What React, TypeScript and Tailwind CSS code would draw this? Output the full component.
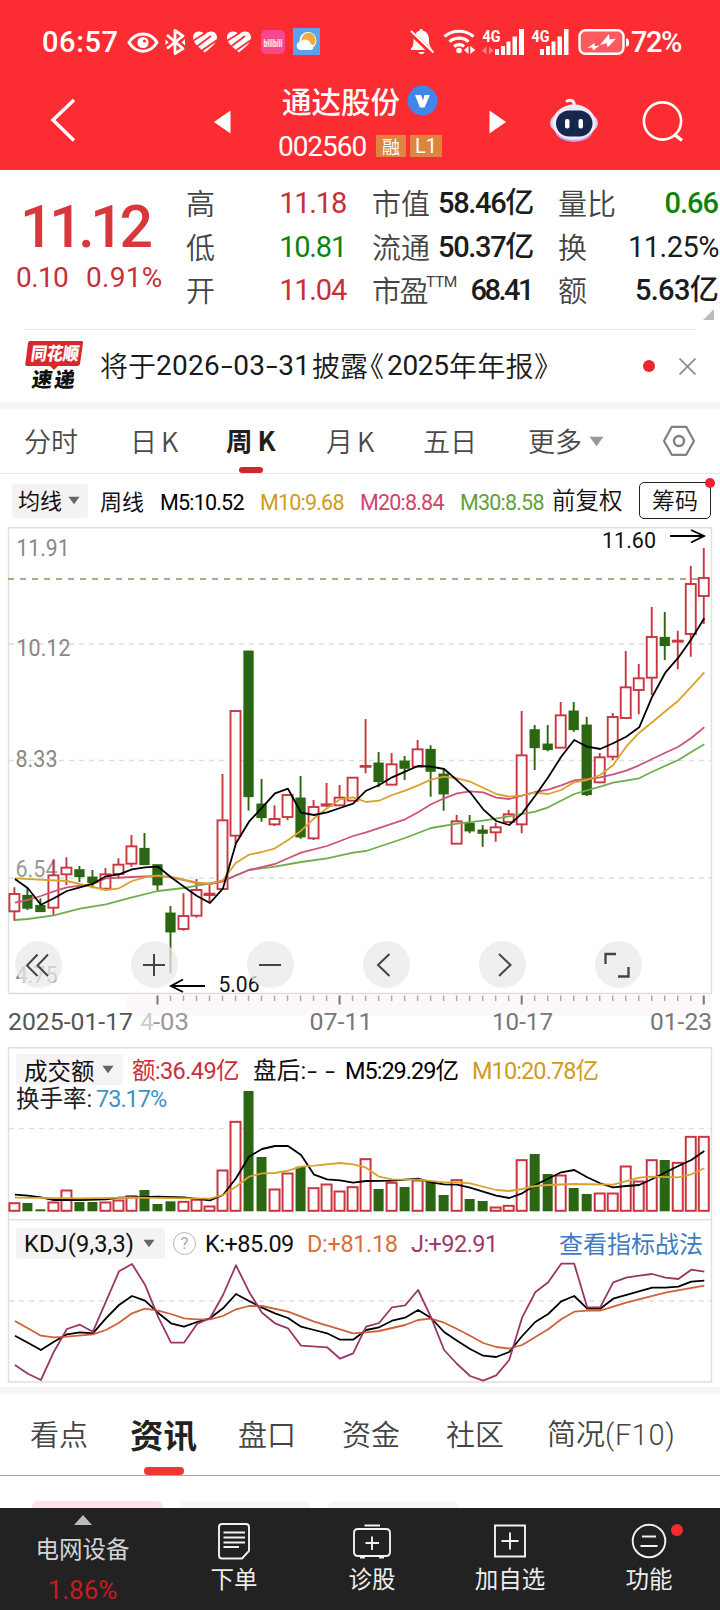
import type { ReactNode } from "react";

const NUM = "font-['Roboto','Noto_Sans_CJK_SC',sans-serif]";
const SVG_FONT = "Roboto, 'Noto Sans CJK SC', sans-serif";

/* ---------- chart data ---------- */
// [rising, high, bodyTop, bodyBottom, low] in thirds of a pixel below y=640
type Candle = [number, number, number, number, number];
const CANDLES: Candle[] = [
  [1, 742, 762, 814, 842], [0, 745, 766, 805, 810], [0, 775, 796, 815, 815], [1, 658, 706, 803, 825],
  [1, 652, 683, 703, 735], [0, 678, 689, 710, 726], [0, 690, 711, 728, 745], [1, 684, 703, 746, 746],
  [1, 655, 674, 702, 716], [1, 585, 619, 671, 680], [0, 579, 625, 674, 674], [0, 674, 674, 735, 752],
  [0, 798, 819, 876, 1000], [1, 760, 828, 867, 872], [1, 717, 750, 827, 833], [1, 735, 761, 765, 790],
  [1, 402, 541, 747, 747], [1, 213, 213, 587, 612], [0, 33, 33, 470, 512], [0, 417, 492, 533, 545],
  [1, 496, 537, 553, 558], [1, 462, 465, 531, 541], [0, 408, 474, 591, 596], [1, 480, 501, 595, 600],
  [1, 429, 493, 497, 500], [1, 435, 473, 496, 498], [1, 413, 413, 482, 482], [1, 237, 378, 378, 400],
  [0, 336, 369, 425, 442], [1, 339, 373, 434, 436], [0, 348, 363, 385, 420], [1, 300, 328, 380, 380],
  [0, 316, 328, 394, 470], [0, 390, 402, 462, 512], [1, 525, 544, 611, 611], [0, 525, 550, 573, 580],
  [0, 555, 570, 580, 620], [1, 548, 562, 577, 605], [1, 510, 523, 546, 546], [1, 213, 346, 553, 580],
  [0, 255, 269, 323, 390], [0, 255, 312, 329, 334], [1, 186, 226, 323, 323], [0, 186, 213, 269, 275],
  [0, 231, 255, 464, 468], [1, 339, 352, 427, 430], [1, 219, 231, 350, 360], [1, 33, 142, 234, 234],
  [1, 72, 115, 150, 223], [1, -99, -9, 113, 165], [0, -84, -8, 17, 60], [1, -28, 2, 5, 88],
  [1, -222, -168, -18, 50], [1, -276, -186, -132, -48],
];
const VOLUME = [
  488, 489, 508, 486, 450, 486, 486, 486, 480, 467, 450, 492, 484, 484, 478, 498, 390, 244, 153, 351, 447, 399, 380,
  443, 432, 453, 440, 356, 447, 427, 441, 420, 424, 465, 419, 477, 483, 501, 496, 359, 342, 402, 405, 444, 462, 459,
  459, 378, 423, 359, 360, 367, 289, 289,
];
type Pts = [number, number][];
const M5: Pts = [[0,717],[1,745],[2,794],[3,775],[4,753],[5,742],[6,731],[7,709],[8,703],[9,688],[10,682],[11,680],[12,712],[13,740],[14,768],[15,789],[16,745],[17,610],[18,545],[19,503],[20,460],[21,446],[22,518],[23,525],[24,517],[25,504],[26,491],[27,452],[28,435],[29,412],[30,395],[31,378],[32,380],[33,387],[34,421],[35,457],[36,508],[37,543],[38,555],[39,520],[40,467],[41,412],[42,350],[43,300],[44,320],[45,327],[46,310],[47,290],[48,262],[49,170],[50,98],[51,53],[52,-2],[53,-65]];
const M10: Pts = [[0,715],[4,723],[7,750],[8,745],[9,723],[10,712],[11,706],[12,712],[14,727],[15,732],[16,720],[17,668],[18,644],[19,636],[20,625],[21,600],[22,572],[23,535],[24,505],[25,478],[26,472],[27,486],[28,482],[29,465],[30,452],[31,436],[32,419],[33,410],[34,415],[35,425],[36,443],[37,462],[38,470],[39,466],[40,458],[41,462],[42,450],[43,427],[44,420],[45,405],[46,375],[47,320],[48,278],[49,247],[50,214],[51,182],[52,140],[53,97]];
const M20: Pts = [[0,788],[1,780],[2,768],[3,754],[4,742],[5,737],[6,733],[7,715],[9,711],[11,708],[12,711],[13,720],[14,729],[15,732],[16,724],[17,706],[18,690],[20,672],[21,655],[22,638],[24,618],[26,588],[27,577],[30,538],[31,517],[32,493],[33,475],[34,460],[35,454],[36,457],[37,473],[38,477],[39,467],[40,456],[41,449],[42,436],[43,421],[44,417],[45,412],[46,403],[47,392],[48,376],[49,357],[50,338],[51,320],[52,294],[53,262]];
const M30: Pts = [[0,840],[1,837],[3,826],[5,806],[7,793],[9,772],[11,753],[13,744],[14,737],[16,723],[18,690],[20,680],[22,666],[24,655],[26,638],[27,633],[30,594],[32,564],[34,551],[36,542],[38,529],[40,515],[41,502],[43,462],[45,440],[46,428],[48,415],[49,395],[51,360],[52,336],[53,313]];
const V5: Pts = [[0,464],[1,467],[2,472],[3,480],[5,480],[7,478],[8,473],[9,472],[11,470],[13,472],[15,481],[16,465],[17,415],[18,350],[19,327],[20,318],[21,318],[22,345],[23,404],[24,418],[25,421],[26,428],[27,423],[29,422],[31,416],[32,427],[33,433],[34,434],[35,443],[37,467],[38,474],[39,460],[40,435],[42,397],[43,390],[44,412],[45,430],[46,442],[47,438],[48,435],[49,417],[51,378],[52,360],[53,333]];
const V10: Pts = [[0,473],[5,475],[9,473],[15,476],[16,465],[17,440],[18,410],[19,400],[20,399],[21,392],[22,380],[23,377],[25,369],[26,373],[27,383],[28,410],[29,418],[31,419],[33,427],[34,427],[35,430],[37,450],[38,453],[39,447],[40,438],[41,435],[43,432],[46,434],[48,413],[49,410],[51,412],[52,403],[53,385]];
const J: Pts = [[0,975],[1,1001],[2,1020],[3,935],[4,867],[5,854],[6,875],[7,785],[8,694],[9,672],[10,734],[11,830],[12,908],[13,908],[14,852],[15,835],[16,765],[17,676],[18,755],[19,818],[20,850],[21,865],[22,917],[24,922],[25,956],[26,940],[27,860],[28,849],[29,802],[30,796],[31,750],[32,832],[33,930],[34,972],[35,1008],[36,1022],[37,1006],[38,960],[39,832],[40,757],[41,727],[42,671],[43,671],[44,802],[45,802],[46,727],[47,713],[48,707],[49,702],[50,713],[51,717],[52,689],[53,695]];
const K: Pts = [[0,887],[1,908],[2,930],[3,905],[4,883],[5,877],[6,880],[7,835],[8,795],[9,768],[10,782],[11,818],[12,850],[13,860],[14,846],[15,835],[16,805],[17,762],[18,783],[19,803],[20,820],[21,834],[22,860],[23,870],[24,880],[25,899],[26,899],[27,870],[28,862],[29,842],[30,833],[31,810],[32,834],[33,876],[34,902],[35,927],[36,947],[37,951],[38,936],[39,888],[40,846],[41,822],[42,784],[43,768],[44,806],[45,806],[46,776],[49,743],[50,743],[51,740],[52,725],[53,722]];
const D: Pts = [[0,843],[1,865],[2,887],[3,892],[4,890],[6,883],[7,870],[8,848],[9,820],[10,806],[11,812],[12,822],[13,835],[14,838],[15,838],[16,828],[17,808],[18,798],[19,798],[21,815],[23,845],[25,868],[26,880],[27,877],[28,873],[30,855],[31,840],[32,836],[33,848],[34,867],[35,887],[36,909],[37,921],[38,926],[39,915],[41,868],[42,838],[43,815],[44,812],[45,812],[47,788],[50,758],[53,737]];

const RED = "#c9363f";
const GREEN = "#2b6612";
const cx = (i: number) => 14.4 + i * 13.007;

function Line({ pts, base, color }: { pts: Pts; base: number; color: string }) {
  return (
    <polyline
      points={pts.map(([i, y]) => `${(cx(i) + 0.5).toFixed(1)},${(base + y / 3).toFixed(1)}`).join(" ")}
      fill="none"
      stroke={color}
      strokeWidth="1.8"
      strokeLinejoin="round"
    />
  );
}

function Label({ x, y, w, size, fill, children }: { x: number; y: number; w: number; size: number; fill: string; children: string }) {
  return (
    <text x={x} y={y} fontSize={size} fill={fill} textLength={w} lengthAdjust="spacingAndGlyphs" fontFamily={SVG_FONT}>
      {children}
    </text>
  );
}

function Caret({ className = "", color = "#666" }: { className?: string; color?: string }) {
  return (
    <svg viewBox="0 0 14 10" className={className}>
      <path d="M0.5 0.5H13.5L7 9.5Z" fill={color} />
    </svg>
  );
}

/* ---------- header ---------- */
function Heart({ x }: { x: number }) {
  return (
    <g transform={`translate(${x} 0)`}>
      <path d="M12 52.500C8 49 0 43.500 0 37.500C0 31 8 29.500 12 34.500C16 29.500 24 31 24 37.500C24 43.500 16 49 12 52.500Z" fill="#fff" />
      <path d="M-1 41.500L12.500 33M4 46.500L18 36M9 50.500L24 40" stroke="#fb2d33" strokeWidth="1.700" />
    </g>
  );
}

function StatusBar() {
  return (
    <div className="flex h-[70px] items-center pt-[13px] text-white">
      <span className={`mt-[2px] ml-[42px] w-[83px] text-[29px] leading-none font-medium tracking-[0.6px] ${NUM}`}>06:57</span>
      <svg className="h-[36px] w-[200px] shrink-0" viewBox="125 24 200 36">
        <path d="M129 42.5C133 36 138 34 143 34S153 36 157 42.5C153 49 148 51.200 143 51.200S133 49 129 42.500Z" fill="none" stroke="#fff" strokeWidth="3" />
        <circle cx="143" cy="42.500" r="5.600" fill="#fff" />
        <circle cx="144.500" cy="41" r="1.600" fill="#fb2d33" />
        <path d="M167 35L183 48.500L175 53.500V30.500L183 36L167 48.500" fill="none" stroke="#fff" strokeWidth="2.800" strokeLinejoin="round" />
        <path d="M165.500 39.500l3 2.700-3 2.700zM185 39l-3.500 3.200 3.500 3.200z" fill="#fff" />
        <Heart x={193} />
        <Heart x={227} />
        <rect x="261" y="30" width="24" height="24" rx="5" fill="#f6488f" />
        <text x="263.500" y="46.500" fontSize="11" fontWeight="900" fill="#ffe3f0" textLength="19" lengthAdjust="spacingAndGlyphs" fontFamily="Roboto, sans-serif">bilibili</text>
        <rect x="293" y="28" width="27" height="27" fill="#5aa2ea" />
        <circle cx="308" cy="40.500" r="8.500" fill="#fff" />
        <circle cx="308.500" cy="40" r="7.200" fill="#f3ab3c" />
        <path d="M301 50a4.300 4.300 0 0 1 0-8.600 5.500 5.500 0 0 1 9.500 2.600c4 .5 3.500 6 .5 6z" fill="#fff" />
      </svg>
      <svg className="ml-[79px] h-[36px] w-[226px] shrink-0" viewBox="404 24 226 36">
        <path d="M411 50V48.500C413.500 46.500 413.500 43 413.500 40C413.500 35 416.500 31.500 419.500 30.800C419.500 28.300 423 28.300 423 30.800C427 31.500 429 35.500 429 40C429 43.500 429.500 46.500 431.500 48.500V50ZM418.500 52H424.500C424 54.800 419 54.800 418.500 52Z" fill="#fff" />
        <path d="M409.500 31.500L431.500 52.500" stroke="#fb2d33" strokeWidth="5" />
        <path d="M411 31L433.500 52.500" stroke="#fff" strokeWidth="2" />
        <g fill="none" stroke="#fff" strokeWidth="3.200">
          <path d="M444.500 36.500C452.500 29.500 465.500 29.500 473.500 36.500" />
          <path d="M449.500 41.800C455 37 463.500 37 468.500 41.800" />
          <path d="M454 46.500C457 44 461.500 44 464 46.500" />
        </g>
        <circle cx="459" cy="50.500" r="2.800" fill="#fff" />
        <path d="M468.500 46v8l-4.500-4zM470.300 46v8l5-4z" fill="#fff" />
        <path d="M486.500 46.500v8l-4.500-4zM489 46.500v8l4.500-4z" fill="#ff7d80" />
        <g fill="#fff">
          <rect x="495" y="49" width="4" height="6" /><rect x="501" y="46" width="4" height="9" /><rect x="506.500" y="41.500" width="4" height="13.500" /><rect x="512.500" y="36.500" width="4.500" height="18.500" /><rect x="519" y="29" width="5" height="26" />
          <rect x="540" y="49" width="4" height="6" /><rect x="546" y="46" width="4" height="9" /><rect x="551.500" y="41.500" width="4" height="13.500" /><rect x="557.500" y="36.500" width="4.500" height="18.500" /><rect x="564" y="29" width="4.500" height="26" />
          <text x="482.500" y="42" fontSize="17" fontWeight="700" textLength="18" lengthAdjust="spacingAndGlyphs" fontFamily="Roboto, sans-serif">4G</text>
          <text x="531.500" y="42" fontSize="17" fontWeight="700" textLength="18" lengthAdjust="spacingAndGlyphs" fontFamily="Roboto, sans-serif">4G</text>
          <path d="M626 38.500h1q2 0 2 4t-2 4h-1z" />
        </g>
        <rect x="579.500" y="30.300" width="44" height="23.500" rx="6" fill="#fd5a60" stroke="#fff" strokeWidth="2.400" />
        <path d="M600 45L609 34l.5 5.500 6.500-.8L607.500 47.500l-.8-4.300zM587.500 48l7-5 .3 3.200 5-.8-6.800 5-.5-2.900z" fill="#fff" />
      </svg>
      <span className={`mt-[2px] ml-[1px] text-[29px] leading-none font-medium tracking-[-1.5px] ${NUM}`}>72%</span>
    </div>
  );
}

function Header() {
  return (
    <header className="h-[170px] bg-[#fb2d33] text-white">
      <StatusBar />
      <div className="flex h-[99px] items-start">
        <svg className="mt-[27px] ml-[48px] h-[48px] w-[30px]" viewBox="48 97 30 48">
          <path d="M74 100L53 120L74 140.500" fill="none" stroke="#fff" strokeWidth="3.400" />
        </svg>
        <svg className="mt-[40px] ml-[136px] h-[24px] w-[17px]" viewBox="0 0 17 24"><path d="M16.500 0.500V23.500L0 12Z" fill="#fff" /></svg>
        <div className="ml-[47px] w-[172px]">
          <div className="mt-[12px] ml-[4px] flex items-center">
            <h1 className="w-[125px] text-[29.500px] leading-[36px] font-medium whitespace-nowrap font-['Noto_Sans_CJK_SC',sans-serif]">通达股份</h1>
            <svg className="h-[31px] w-[31px]" viewBox="0 0 31 31">
              <circle cx="15.500" cy="15.500" r="15" fill="#3f87e8" />
              <path d="M8 10H14L16 15.500L17.500 10H23L17.500 22.500H13Z" fill="#fff" />
            </svg>
          </div>
          <div className="mt-[13px] flex items-center">
            <span className={`mt-[2px] w-[98px] text-[28px] leading-[28px] font-[450] tracking-[-1.050px] ${NUM}`}>002560</span>
            <span className="flex h-[22px] w-[30px] items-center justify-center bg-[#dd8441] text-[18px] leading-none font-['Noto_Sans_CJK_SC',sans-serif]">融</span>
            <span className={`ml-[4px] flex h-[22px] w-[32px] items-center justify-center bg-[#dd8441] text-[20px] leading-none ${NUM}`}>L1</span>
          </div>
        </div>
        <svg className="mt-[40px] ml-[39px] h-[24px] w-[17px]" viewBox="0 0 17 24"><path d="M0.500 0.500V23.500L17 12Z" fill="#fff" /></svg>
        <svg className="mt-[25px] ml-[42px] h-[50px] w-[52px]" viewBox="548 95 52 50">
          <path d="M574 106C575 101 571 99 567 101" fill="none" stroke="#f4ecff" strokeWidth="3" strokeLinecap="round" />
          <ellipse cx="574" cy="123" rx="24" ry="13" fill="#dcc9ff" />
          <ellipse cx="574" cy="123" rx="21.500" ry="18.500" fill="#efeaff" />
          <path d="M557 134C564 143 584 143 591 134" fill="none" stroke="#c3a5f8" strokeWidth="2" />
          <rect x="556" y="110.500" width="36.500" height="26" rx="13" fill="#17264c" />
          <rect x="565" y="119" width="4.500" height="9.500" rx="2" fill="#fff" /><rect x="578.500" y="119" width="4.500" height="9.500" rx="2" fill="#fff" />
        </svg>
        <svg className="mt-[29px] ml-[39px] h-[46px] w-[46px]" viewBox="640 99 46 46">
          <circle cx="663.500" cy="121" r="18.600" fill="none" stroke="#fff" strokeWidth="2.600" />
          <path d="M675.500 134.500L683 140.500" stroke="#fff" strokeWidth="3.400" />
        </svg>
      </div>
    </header>
  );
}

/* ---------- quote ---------- */
function Stat({ label, sup, value, color = "text-[#1c1c1c]", tight = "mr-[1px] tracking-[-1.350px]", medium = false }: { label: string; sup?: string; value: string; color?: string; tight?: string; medium?: boolean }) {
  return (
    <div className="flex h-[43.700px] items-center justify-between">
      <span className={`mb-[1px] flex text-[29px] leading-none whitespace-nowrap text-[#444] font-['Noto_Sans_CJK_SC',sans-serif] font-[350] ${sup ? "tracking-[-1.500px]" : ""}`}>
        {label}
        {sup && <sup className={`top-0 -ml-px text-[15.500px] leading-none font-normal tracking-[-0.500px] ${NUM}`}>{sup}</sup>}
      </span>
      <span className={`mt-[1px] text-[29px] leading-none whitespace-nowrap ${tight} ${color} ${medium ? "font-medium" : "font-[450]"} ${NUM}`}>{value}</span>
    </div>
  );
}

function Quote() {
  return (
    <section className="flex h-[159px] bg-white pt-[11px]">
      <div className={`w-[186px] text-[#d8373c] ${NUM}`}>
        <div className="mt-[16px] pl-[20px] text-[59px] leading-[60px] font-medium tracking-[-4.400px]">11.12</div>
        <div className="mt-[7px] flex pl-[16px] text-[28px] leading-[28px] font-[450] text-[#c5303a]">
          <span className="w-[70px] tracking-[-0.600px]">0.10</span>
          <span className="tracking-[0.300px]">0.91%</span>
        </div>
      </div>
      <div className="w-[160px]">
        <Stat label="高" value="11.18" color="text-[#c5303a]" tight="tracking-[-1.200px]" />
        <Stat label="低" value="10.81" color="text-[#0d830d]" tight="tracking-[-1.200px]" />
        <Stat label="开" value="11.04" color="text-[#c5303a]" tight="tracking-[-1.200px]" />
      </div>
      <div className="ml-[26px] w-[162px]">
        <Stat label="市值" value="58.46亿" medium />
        <Stat label="流通" value="50.37亿" medium />
        <Stat label="市盈" sup="TTM" value="68.41" medium tight="mr-[2px] tracking-[-2.500px]" />
      </div>
      <div className="ml-[24px] flex w-[162px] flex-col">
        <Stat label="量比" value="0.66" color="text-[#0d830d]" medium tight="mr-[2px] tracking-[-1px]" />
        <Stat label="换" value="11.25%" tight="mr-[1px] tracking-[-0.500px]" />
        <Stat label="额" value="5.63亿" medium tight="mr-[2px] tracking-[-0.700px]" />
        <svg className="-mt-[3px] ml-[145px] h-[11px] w-[11px] shrink-0" viewBox="0 0 11 11"><path d="M11 0V11H0Z" fill="#bbb" /></svg>
      </div>
    </section>
  );
}

function Dash({ children = "-" }: { children?: string }) {
  return <span className="mx-[2.500px] inline-block scale-x-[1.500]">{children}</span>;
}

function News() {
  return (
    <section className="mx-[24px] flex h-[73px] items-center border-t-[1.500px] border-[#ececec] text-[28px] leading-none text-[#1a1a1a] font-['Noto_Sans_CJK_SC',sans-serif]">
      <svg className="h-[52px] w-[62px] shrink-0 overflow-visible" viewBox="24 340 62 52">
        <path d="M30 341H81.500Q83.500 341 83 343L80 364Q79.500 366 77.500 366H58L54 370L50 366H27Q25 366 25.300 364L28 343Q28.300 341 30 341Z" fill="#d9282d" />
        <text x="81" y="360.500" transform="skewX(-8)" fontSize="18" fontWeight="900" fill="#fff" textLength="48" lengthAdjust="spacingAndGlyphs" fontFamily="'Noto Sans CJK SC', sans-serif">同花顺</text>
        <text x="85.500" y="387" transform="skewX(-8)" fontSize="20.500" fontWeight="900" fill="#111" textLength="43" fontFamily="'Noto Sans CJK SC', sans-serif">速递</text>
      </svg>
      <div className="mb-[3px] flex w-[536px] items-center pl-[14px] font-[350] whitespace-nowrap">
        <span className="w-[56px]">将于</span>
        <span className={`mt-[3px] w-[156px] font-normal tracking-[0.300px] ${NUM}`}>2026<Dash />03<Dash />31</span>
        <span className="w-[58px]">披露</span>
        <span className="w-[17px] [font-feature-settings:'halt']">《</span>
        <span className={`mt-[3px] w-[62px] font-normal tracking-[-0.300px] ${NUM}`}>2025</span>
        <span className="w-[85px] tracking-[0.300px]">年年报》</span>
      </div>
      <span className="ml-[22px] h-[12px] w-[12px] shrink-0 rounded-full bg-[#e9262b]" />
      <svg className="ml-[24px] h-[17px] w-[17px] shrink-0" viewBox="0 0 17 17"><path d="M0.500 0.500L16.500 16.500M16.500 0.500L0.500 16.500" stroke="#8b8b8b" strokeWidth="1.700" /></svg>
    </section>
  );
}

function PeriodTabs() {
  const plain = "flex h-full items-center pb-[2px] text-[27px] leading-none text-[#4a4a4a] whitespace-nowrap font-[350]";
  return (
    <nav className="flex h-[65px] items-center border-b-[1.500px] border-[#e8e8e8] font-['Noto_Sans_CJK_SC',sans-serif]">
      <span className={`ml-[24px] w-[106px] ${plain}`}>分时</span>
      <span className={`w-[96px] gap-[4px] ${plain}`}>日<span>K</span></span>
      <span className="relative flex h-full w-[100px] items-center gap-[5px] pb-[2px] text-[26.500px] leading-none font-bold text-[#1f1f1f]">
        周<span>K</span>
        <span className="absolute bottom-0 left-[13px] h-[6px] w-[24px] rounded-full bg-[#d2262f]" />
      </span>
      <span className={`w-[97px] gap-[4px] ${plain}`}>月<span>K</span></span>
      <span className={`w-[105px] ${plain}`}>五日</span>
      <span className={`w-[61px] ${plain}`}>更多</span>
      <Caret className="h-[13px] w-[15px]" color="#999" />
      <svg className="ml-[58px] h-[32px] w-[34px]" viewBox="0 0 34 32">
        <path d="M9.800 1.800H24.200L32 16L24.200 29.800H9.800L2 16Z" fill="none" stroke="#808080" strokeWidth="2.200" strokeLinejoin="round" />
        <circle cx="17" cy="16" r="5" fill="none" stroke="#808080" strokeWidth="2.400" />
      </svg>
    </nav>
  );
}

function Val({ w, color = "text-black", t = "tracking-[-0.800px]", children }: { w: string; color?: string; t?: string; children: ReactNode }) {
  return <span className={`mt-[4px] shrink-0 leading-none whitespace-nowrap ${NUM} ${w} ${color} ${t}`}>{children}</span>;
}

function MaLegend() {
  return (
    <div className="flex h-[53px] items-center text-[21.500px] text-[#111]">
      <div className="ml-[12px] flex h-[34px] w-[76px] items-center rounded-[4px] bg-[#f4f2f3] pl-[6px] text-[22px] leading-none font-['Noto_Sans_CJK_SC',sans-serif]">
        <span className="mb-[3px] w-[50px]">均线</span>
        <Caret className="h-[9px] w-[12px]" />
      </div>
      <span className="mb-[1px] ml-[12px] w-[60px] text-[22px] leading-none font-['Noto_Sans_CJK_SC',sans-serif]">周线</span>
      <Val w="w-[100px]">M5:10.52</Val>
      <Val w="w-[100px]" color="text-[#d29a1e]">M10:9.68</Val>
      <Val w="w-[100px]" color="text-[#d0446a]">M20:8.84</Val>
      <Val w="w-[92px]" color="text-[#5da336]">M30:8.58</Val>
      <span className="mb-[1px] w-[87px] text-[23.500px] leading-none font-[350] font-['Noto_Sans_CJK_SC',sans-serif]">前复权</span>
      <div className="relative flex h-[37px] w-[72px] items-center justify-center rounded-[5px] border-[1.500px] border-[#222] pb-[3px] text-[23px] leading-none font-[350] font-['Noto_Sans_CJK_SC',sans-serif]">
        筹码
        <span className="absolute -top-[5px] -right-[5px] h-[10px] w-[10px] rounded-full bg-[#f5202d]" />
      </div>
    </div>
  );
}

/* ---------- charts ---------- */
function Grid({ y }: { y: number }) {
  return <path d={`M9 ${y}H711`} stroke="#dedede" strokeWidth="1.300" strokeDasharray="5 5" />;
}

function CandleChart() {
  const btn = "flex h-[47px] w-[47px] items-center justify-center rounded-full bg-[#e9e9e9]/75";
  const ic = "h-[30px] w-[30px]";
  return (
    <div className="relative h-[520px]">
      <svg className="block h-[520px] w-[720px]" viewBox="0 527 720 520">
        <rect x="127" y="995" width="584" height="21" fill="#fcf8f9" />
        <path d="M8.500 993.500V527.800H711.500V993.500" fill="none" stroke="#e0e0e0" strokeWidth="1.500" />
        <path d="M8.500 993.500H711.500" stroke="#e0dcdd" strokeWidth="1.500" />
        <Grid y={644} /><Grid y={760.5} /><Grid y={878} />
        <path d="M8 579H711" stroke="#9c8c60" strokeWidth="1.600" strokeDasharray="6 6" />
        <Label x={16.5} y={556} w={53} size={24} fill="#888">11.91</Label>
        <Label x={16.5} y={656} w={54} size={24} fill="#888">10.12</Label>
        <Label x={15.5} y={767} w={42} size={24} fill="#888">8.33</Label>
        <Label x={15.5} y={876.5} w={42} size={24} fill="#999">6.54</Label>
        <Label x={15.5} y={982.5} w={42} size={24} fill="#8a8a8a">4.75</Label>
        {CANDLES.map(([up, h, t, b, l], i) => {
          const x = cx(i);
          const y = (v: number) => 640 + v / 3;
          const color = up ? RED : GREEN;
          return (
            <g key={i} stroke={color} strokeWidth="1.900">
              <path d={`M${x} ${y(h)}V${y(t)}M${x} ${y(b)}V${y(l)}`} />
              {up ? (
                <rect x={x - 5} y={y(t)} width="10" height={Math.max(y(b) - y(t), 0.8)} fill="#fff" />
              ) : (
                <rect x={x - 4.2} y={y(t) + 0.5} width="8.400" height={Math.max(y(b) - y(t) - 1, 1)} fill={color} />
              )}
            </g>
          );
        })}
        <Line pts={M30} base={640} color="#6fae4e" />
        <Line pts={M20} base={640} color="#cf5379" />
        <Line pts={M10} base={640} color="#d8a32c" />
        <Line pts={M5} base={640} color="#000" />
        <Label x={602} y={548} w={54} size={21.5} fill="#111">11.60</Label>
        <path d="M670 536H703M691 530L704 536L691 542.500" fill="none" stroke="#000" strokeWidth="1.900" />
        <Label x={218.500} y={991.5} w={41} size={21.5} fill="#111">5.06</Label>
        <path d="M205 986H171M183 979.500L171 986L183 992" fill="none" stroke="#000" strokeWidth="1.900" />
        {CANDLES.map((_, i) =>
          i < 11 ? null : (
            <path key={i} d={`M${cx(i)} 995.500V${(i - 11) % 14 === 0 ? 1004.500 : 1001}`} stroke={(i - 11) % 14 === 0 ? "#777" : "#aaa"} strokeWidth={(i - 11) % 14 === 0 ? 2 : 1.5} />
          ),
        )}
        <Label x={8} y={1030} w={125} size={23.5} fill="#555">2025-01-17</Label>
        <Label x={140} y={1030} w={14} size={23.5} fill="#ccc">4</Label>
        <Label x={153} y={1030} w={36} size={23.5} fill="#999">-03</Label>
        <Label x={309.5} y={1030} w={63} size={23.5} fill="#777">07-11</Label>
        <Label x={492} y={1030} w={61} size={23.5} fill="#777">10-17</Label>
        <Label x={650} y={1030} w={62} size={23.5} fill="#777">01-23</Label>
      </svg>
      <div className="absolute top-[414px] left-[14.500px] flex gap-[69px]">
        <button className={btn}><svg className={ic} viewBox="0 0 30 30" fill="none" stroke="#444" strokeWidth="2"><path d="M14.500 4.500L4 15.500L14.500 26M25 4.500L14.500 15.500L25 26" /></svg></button>
        <button className={btn}><svg className={ic} viewBox="0 0 30 30" fill="none" stroke="#444" strokeWidth="2"><path d="M4 15H26M15 4V26" /></svg></button>
        <button className={btn}><svg className={ic} viewBox="0 0 30 30" fill="none" stroke="#444" strokeWidth="2"><path d="M4 15H26" /></svg></button>
        <button className={btn}><svg className={ic} viewBox="0 0 30 30" fill="none" stroke="#444" strokeWidth="2"><path d="M18.500 4L7 15L18.500 26" /></svg></button>
        <button className={btn}><svg className={ic} viewBox="0 0 30 30" fill="none" stroke="#444" strokeWidth="2"><path d="M12 4L23.500 15L12 26" /></svg></button>
        <button className={btn}><svg className={ic} viewBox="0 0 30 30" fill="none" stroke="#444" strokeWidth="2.300"><path d="M2.500 14V4H13M25.500 17V26.500H15" /></svg></button>
      </div>
    </div>
  );
}

function VolumeChart() {
  return (
    <div className="relative h-[172px]">
      <svg className="block h-[172px] w-[720px]" viewBox="0 1047 720 172">
        <path d="M8.500 1219V1047.800H711.500V1219" fill="none" stroke="#e0e0e0" strokeWidth="1.500" />
        <Grid y={1128.7} />
        {VOLUME.map((v, i) => {
          const up = CANDLES[i][0] === 1;
          const y = 1040 + v / 3;
          return up ? (
            <rect key={i} x={cx(i) - 5} y={y + 0.5} width="10" height={1210.300 - y} fill="#fff" stroke={RED} strokeWidth="2" />
          ) : (
            <rect key={i} x={cx(i) - 5} y={y} width="10" height={1211.300 - y} fill={GREEN} />
          );
        })}
        <Line pts={V5} base={1040} color="#000" />
        <Line pts={V10} base={1040} color="#d8a32c" />
      </svg>
      <div className="absolute top-[6px] left-0 text-[23.500px] text-[#111]">
        <div className="flex h-[33px] items-center">
          <div className="ml-[16px] flex h-[31px] w-[107px] items-center rounded-[4px] bg-[#f5f3f4] pl-[8px] leading-none font-['Noto_Sans_CJK_SC',sans-serif]">
            <span className="mt-[2px] w-[78px]">成交额</span><Caret className="h-[9px] w-[12px]" />
          </div>
          <Val w="ml-[9px] w-[121px]" color="text-[#c9303c]" t="tracking-[-0.600px]">额:36.49亿</Val>
          <Val w="w-[92px]" color="text-[#111]" t="tracking-[0.300px]">盘后:<Dash>-</Dash> <Dash>-</Dash></Val>
          <Val w="w-[127px]" t="tracking-[-1px]">M5:29.29亿</Val>
          <Val w="w-[130px]" color="text-[#d29a1e]" t="tracking-[-0.900px]">M10:20.78亿</Val>
        </div>
        <div className="flex h-[24px] items-center pl-[16px]">
          <Val w="w-[80px]" color="text-[#222]" t="tracking-[0px]">换手率:</Val>
          <Val w="w-[80px]" color="text-[#3d94c4]" t="tracking-[-1px]">73.17%</Val>
        </div>
      </div>
    </div>
  );
}

function KdjChart() {
  return (
    <div className="relative h-[168px]">
      <svg className="block h-[168px] w-[720px]" viewBox="0 1219 720 168">
        <path d="M8.500 1219.800H711.500V1382H8.500Z" fill="none" stroke="#e0e0e0" strokeWidth="1.500" />
        <Grid y={1301} />
        <Line pts={K} base={1040} color="#000" />
        <Line pts={D} base={1040} color="#cf6238" />
        <Line pts={J} base={1040} color="#9a3667" />
      </svg>
      <div className="absolute top-[8px] left-0 flex h-[32px] w-[720px] items-center text-[23.500px] text-[#111]">
        <div className="ml-[16px] flex h-[31px] w-[149px] items-center rounded-[4px] bg-[#f4f2f3] pl-[8px]">
          <Val w="w-[119px]" color="text-[#111]" t="tracking-[0.200px]">KDJ(9,3,3)</Val><Caret className="h-[9px] w-[12px]" />
        </div>
        <span className={`mt-[1px] ml-[8px] flex h-[23px] w-[23px] items-center justify-center rounded-full border-[1.500px] border-[#b5b5b5] text-[17px] leading-none text-[#aaa] ${NUM}`}>?</span>
        <Val w="ml-[9px] w-[102px]" color="text-[#111]" t="tracking-[-0.500px]">K:+85.09</Val>
        <Val w="w-[104px]" color="text-[#d9703c]" t="tracking-[-0.350px]">D:+81.18</Val>
        <Val w="w-[148px]" color="text-[#a0386c]" t="tracking-[-0.550px]">J:+92.91</Val>
        <span className="mb-[1px] text-[24px] leading-none whitespace-nowrap text-[#3f7bc0] font-['Noto_Sans_CJK_SC',sans-serif]">查看指标战法</span>
      </div>
    </div>
  );
}

function InfoTabs() {
  const t = "pb-[2px] leading-none whitespace-nowrap text-[29px] font-[350] text-[#444]";
  return (
    <>
      <nav className="flex h-[82px] items-center border-b-[1.500px] border-[#a5a5a5] font-['Noto_Sans_CJK_SC',sans-serif]">
        <span className={`ml-[30px] w-[100px] ${t}`}>看点</span>
        <span className="relative flex h-full w-[108px] items-center pb-[2px] text-[33.500px] leading-none font-bold text-[#222]">
          资讯
          <span className="absolute bottom-0 left-[14px] h-[8px] w-[40px] rounded-full bg-[#ec3733]" />
        </span>
        <span className={`w-[104px] ${t}`}>盘口</span>
        <span className={`w-[104px] ${t}`}>资金</span>
        <span className={`w-[101px] ${t}`}>社区</span>
        <span className={t}>简况<span className={`tracking-[0.600px] ${NUM}`}>(F10)</span></span>
      </nav>
      <div className="flex h-[32px] items-end gap-[17px] pl-[32px]">
        <div className="h-[7px] w-[131px] rounded-t-[6px] bg-[#fce3e7]" />
        <div className="h-[7px] w-[131px] rounded-t-[6px] bg-[#f7f7f7]" />
        <div className="h-[7px] w-[131px] rounded-t-[6px] bg-[#f7f7f7]" />
      </div>
    </>
  );
}

function BarItem({ label, w, dot, children }: { label: string; w: string; dot?: boolean; children: ReactNode }) {
  return (
    <div className={`flex flex-col items-center pt-[13px] ${w}`}>
      <div className="relative">
        <svg className="h-[40px] w-[40px]" viewBox="0 0 40 40" fill="none" stroke="#f2f2f2" strokeWidth="1.900">{children}</svg>
        {dot && <span className="absolute top-[3px] -right-[14px] h-[12px] w-[12px] rounded-full bg-[#f52c2c]" />}
      </div>
      <span className="mt-[5px] text-[23.500px] leading-[24px] text-[#ededed]">{label}</span>
    </div>
  );
}

function BottomBar() {
  return (
    <footer className="flex h-[102px] bg-[#222] font-['Noto_Sans_CJK_SC',sans-serif]">
      <div className="flex w-[165px] flex-col items-center pt-[7px]">
        <svg className="h-[10px] w-[18px]" viewBox="0 0 18 10"><path d="M9 0L18 10H0Z" fill="#bbb" /></svg>
        <span className="mt-[11px] text-[23.500px] leading-[24px] text-[#d4d4d4]">电网设备</span>
        <span className={`mt-[18px] text-[26px] leading-[24px] text-[#c41c22] ${NUM}`}>1.86%</span>
      </div>
      <BarItem label="下单" w="w-[138px]">
        <path d="M8 3H32Q35 3 35 6V30L28 37.500H8Q5 37.500 5 34.500V6Q5 3 8 3Z" />
        <path d="M9.500 11.500H31M9.500 16.500H31M9.500 21.500H31M9.500 26H25" />
      </BarItem>
      <BarItem label="诊股" w="w-[138px]">
        <path d="M12.500 4.500H28M6 8H34Q38 8 38 12V31Q38 35 34 35H6Q2 35 2 31V12Q2 8 6 8ZM8 36.500H13M27 36.500H32M20 15.500V29M13.500 22H27" />
      </BarItem>
      <BarItem label="加自选" w="w-[138px]">
        <path d="M5 4.500H35V35.500H5ZM20 11.500V28.500M11.500 20H28.500" />
      </BarItem>
      <BarItem label="功能" w="w-[140px]" dot>
        <circle cx="20" cy="20" r="16.300" /><path d="M13 15.500H27M11.500 25H28.500" />
      </BarItem>
    </footer>
  );
}

export default function App() {
  return (
    <main className="flex h-[1610px] w-[720px] flex-col overflow-hidden bg-white">
      <Header />
      <Quote />
      <News />
      <div className="h-[7px] shrink-0 bg-[#f6f6f6]" />
      <PeriodTabs />
      <MaLegend />
      <CandleChart />
      <VolumeChart />
      <KdjChart />
      <div className="h-[7px] shrink-0 bg-[#f6f6f6]" />
      <InfoTabs />
      <BottomBar />
    </main>
  );
}
